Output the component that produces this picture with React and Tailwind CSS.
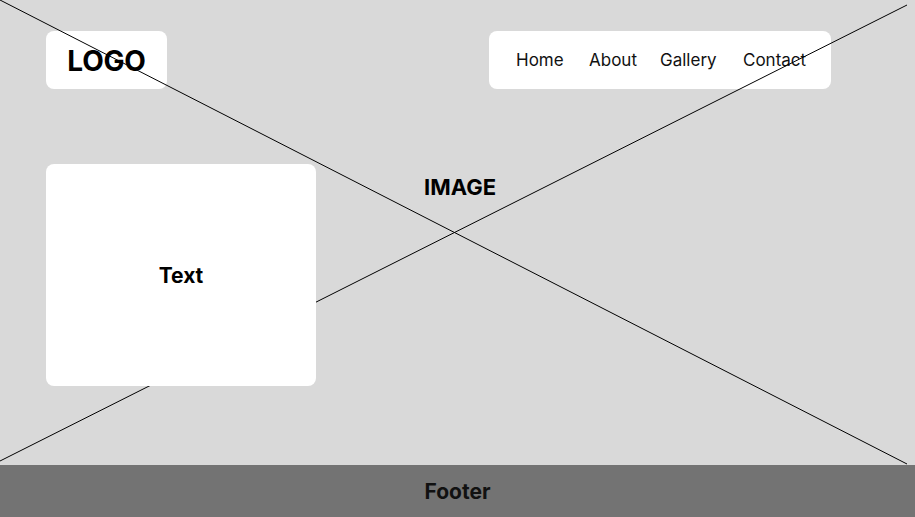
export default function App() {
  const font = { fontFamily: "Inter, 'Open Sans', sans-serif" };
  return (
    <div className="w-[915px] h-[517px] flex flex-col bg-[#d9d9d9] overflow-hidden" style={font}>
      <main className="relative h-[465px] flex flex-col">
        <header className="flex items-start justify-between pl-[46px] pr-[84px] pt-[31px]">
          <div className="w-[121px] h-[58px] bg-white rounded-lg flex items-center justify-center pt-[2px]">
            <span className="text-[28px] font-bold text-black tracking-[-0.2px]">LOGO</span>
          </div>
          <nav className="w-[342px] h-[58px] bg-white rounded-lg flex items-center pl-[27px] pt-[2px] text-[17px] text-[#111]">
            <span className="w-[73px]">Home</span>
            <span className="w-[71px]">About</span>
            <span className="w-[83px]">Gallery</span>
            <span>Contact</span>
          </nav>
        </header>
        <svg className="absolute inset-0 z-10 pointer-events-none" width="915" height="465" viewBox="0 0 915 465">
          <line x1="0" y1="0" x2="907" y2="464" stroke="#000" strokeWidth="1" />
          <line x1="0" y1="461" x2="907" y2="5" stroke="#000" strokeWidth="1" />
        </svg>
        <span className="absolute left-0 right-0 top-[171px] text-center pl-[5px] text-[22px] font-bold text-black">IMAGE</span>
        <div className="relative z-20 ml-[46px] mt-[75px] w-[270px] h-[222px] bg-white rounded-lg flex items-center justify-center pt-[2px]">
          <span className="text-[21px] font-bold text-black">Text</span>
        </div>
      </main>
      <footer className="h-[52px] bg-[#737373] flex items-center justify-center pt-[2px]">
        <span className="text-[21px] font-bold text-[#111]">Footer</span>
      </footer>
    </div>
  );
}
